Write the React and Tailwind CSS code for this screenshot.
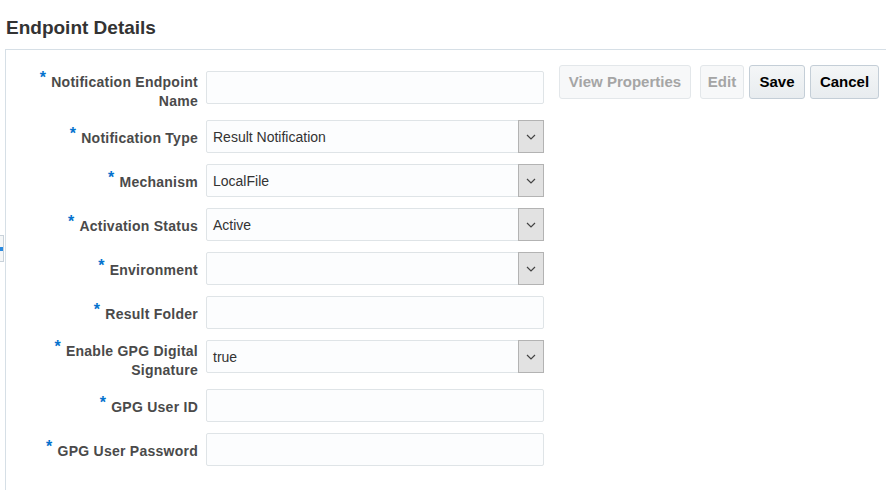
import React from 'react';

const rows = [
  { label: ['Notification Endpoint', 'Name'], type: 'text' },
  { label: ['Notification Type'], type: 'select', value: 'Result Notification' },
  { label: ['Mechanism'], type: 'select', value: 'LocalFile' },
  { label: ['Activation Status'], type: 'select', value: 'Active' },
  { label: ['Environment'], type: 'select', value: '' },
  { label: ['Result Folder'], type: 'text' },
  { label: ['Enable GPG Digital', 'Signature'], type: 'select', value: 'true' },
  { label: ['GPG User ID'], type: 'text' },
  { label: ['GPG User Password'], type: 'text' },
];

const Chevron = () => (
  <svg width="10" height="6" viewBox="0 0 10 6" fill="none">
    <polyline points="1,1 5,5 9,1" stroke="#444" strokeWidth="1.2" />
  </svg>
);

const FieldLabel = ({ lines }) => {
  const multi = lines.length > 1;
  return (
    <div className={`w-[192px] shrink-0 text-right text-[14px] font-bold leading-[19px] tracking-[0.25px] text-[#4a4a4a] ${multi ? 'h-[38px] pt-[2px]' : 'pt-[9px]'}`}>
      {lines.map((line, i) => (
        <div key={i} className="h-[19px]">
          {i === 0 && <span className="relative top-[-4px] mr-[5px] text-[16px] leading-none text-[#0572ce]">*</span>}
          {line}
        </div>
      ))}
    </div>
  );
};

const Field = ({ row }) => {
  if (row.type === 'select') {
    return (
      <div className="flex h-[33px] w-[338px] shrink-0 rounded-[2px] border border-[#dfe4e7] bg-[#fcfdfe]">
        <div className="flex flex-1 items-center pl-[6px] pt-px text-[14px] text-[#333]">{row.value}</div>
        <div className="-m-px flex w-[26px] items-center justify-center border border-[#b3b3b3] bg-[#e2e2e2]">
          <Chevron />
        </div>
      </div>
    );
  }
  return <div className="h-[33px] w-[338px] shrink-0 rounded-[2px] border border-[#dfe4e7] bg-[#fcfdfe]" />;
};

const Btn = ({ children, disabled, className }) => (
  <button
    className={`h-[34px] rounded-[3px] border text-[15px] font-bold ${className} ${
      disabled
        ? 'border-[#e3e7ea] bg-[#f7f8f9] text-[#a5a5a5]'
        : 'border-[#c4ced7] bg-gradient-to-b from-[#f4f6f7] to-[#e8ecef] text-black'
    }`}
  >
    {children}
  </button>
);

export default function App() {
  return (
    <div className="relative h-[490px] w-[886px] overflow-hidden bg-white pl-[5px] font-['Liberation_Sans',Arial,sans-serif]">
      <h1 className="h-[49px] pl-px pt-[15px] text-[19px] font-bold leading-[26px] text-[#333]">Endpoint Details</h1>

      <div className="flex h-[441px] border-l border-t border-[#d6dfe6]">
        <div className="flex flex-col gap-[11px] pt-[21px]">
          {rows.map((row, i) => (
            <div key={i} className="flex h-fit items-start gap-[8px]">
              <FieldLabel lines={row.label} />
              <Field row={row} />
            </div>
          ))}
        </div>

        <div className="ml-[15px] mt-[15px] flex h-[34px]">
          <Btn disabled className="w-[132px]">View Properties</Btn>
          <Btn disabled className="ml-[9px] w-[44px]">Edit</Btn>
          <Btn className="ml-[5px] w-[56px]">Save</Btn>
          <Btn className="ml-[5px] w-[69px]">Cancel</Btn>
        </div>
      </div>

      {/* collapse handle */}
      <div className="absolute left-0 top-[235px] flex h-[27px] w-[4px] items-center border border-l-0 border-[#c9d2da] bg-[#f5f7f8]">
        <div className="h-[4px] w-[3px] bg-[#2a8ae0]" />
      </div>
    </div>
  );
}
